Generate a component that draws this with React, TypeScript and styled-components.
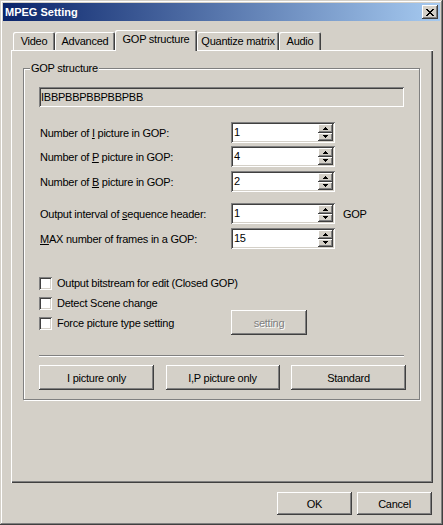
import React from 'react';
import styled, { createGlobalStyle } from 'styled-components';

const FACE = '#d4d0c8';
const SHADOW = '#808080';
const DARK = '#404040';
const LIGHT = '#ffffff';

const RAISED = `inset -1px -1px ${DARK}, inset 1px 1px ${LIGHT}, inset -2px -2px ${SHADOW}, inset 2px 2px ${FACE}`;
const SUNKEN = `inset 1px 1px ${SHADOW}, inset -1px -1px ${LIGHT}, inset 2px 2px ${DARK}, inset -2px -2px ${FACE}`;

const Global = createGlobalStyle`
  html, body { margin: 0; padding: 0; background: ${FACE}; }
  body {
    font-family: "Liberation Sans", Arial, sans-serif;
    font-size: 11px;
    letter-spacing: -0.25px;
    color: #000;
  }
  * { box-sizing: border-box; }
`;

const Window = styled.div`
  width: 443px;
  height: 525px;
  padding: 3px;
  background: ${FACE};
  box-shadow: inset -1px -1px ${DARK}, inset 1px 1px ${FACE}, inset -2px -2px ${SHADOW}, inset 2px 2px ${LIGHT};
  display: flex;
  flex-direction: column;
`;

const TitleBar = styled.div`
  height: 18px;
  flex: none;
  display: flex;
  align-items: center;
  justify-content: space-between;
  padding: 0 2px 0 2px;
  background: linear-gradient(to right, #0a246a, #a6caf0);
`;

const Title = styled.span`
  color: #fff;
  font-weight: bold;
  font-size: 11px;
  letter-spacing: 0;
  line-height: 18px;
`;

const CaptionButton = styled.div`
  width: 16px;
  height: 14px;
  background: ${FACE};
  box-shadow: ${RAISED};
  display: flex;
  align-items: center;
  justify-content: center;
  svg { display: block; }
`;

const Body = styled.div`
  flex: 1;
  display: flex;
  flex-direction: column;
  padding: 9px 7px 0 8px;
`;

const TabStrip = styled.div`
  display: flex;
  align-items: flex-end;
  height: 20px;
  padding-left: 2px;
  position: relative;
  z-index: 1;
`;

const Tab = styled.div<{ $w: number; $active?: boolean }>`
  width: ${(p) => p.$w}px;
  height: ${(p) => (p.$active ? 21 : 18)}px;
  margin-bottom: ${(p) => (p.$active ? -1 : 0)}px;
  padding-bottom: ${(p) => (p.$active ? 3 : 0)}px;
  background: ${FACE};
  border-radius: 2px 2px 0 0;
  box-shadow: inset 1px 1px ${LIGHT}, inset -1px 0 ${DARK}, inset -2px 0 ${SHADOW};
  display: flex;
  align-items: center;
  justify-content: center;
  white-space: nowrap;
`;

const Panel = styled.div`
  width: 422px;
  height: 433px;
  flex: none;
  background: ${FACE};
  box-shadow: inset 1px 1px ${LIGHT}, inset -1px -1px ${DARK}, inset -2px -2px ${SHADOW};
  padding: 18px 0 0 12px;
`;

const GroupBox = styled.div`
  position: relative;
  width: 397px;
  height: 332px;
  border: 1px solid ${SHADOW};
  box-shadow: inset 1px 1px ${LIGHT}, 1px 1px ${LIGHT};
  padding: 18px 15px 0 15px;
  display: flex;
  flex-direction: column;
`;

const Legend = styled.span`
  position: absolute;
  top: -7px;
  left: 6px;
  padding: 0 1px;
  line-height: 13px;
  background: ${FACE};
`;

const PatternField = styled.div`
  height: 20px;
  width: 365px;
  background: ${FACE};
  box-shadow: ${SUNKEN};
  padding: 0 2px;
  display: flex;
  align-items: center;
`;

const FormRow = styled.div<{ $mt: number }>`
  display: flex;
  align-items: center;
  height: 21px;
  margin-top: ${(p) => p.$mt}px;
`;

const FieldLabel = styled.span`
  width: 192px;
  flex: none;
  padding-left: 1px;
  white-space: nowrap;
`;

const Accel = styled.u`
  text-underline-offset: 1px;
`;

const Spinner = styled.div`
  width: 104px;
  height: 21px;
  flex: none;
  background: #fff;
  box-shadow: ${SUNKEN};
  padding: 2px;
  display: flex;
`;

const SpinValue = styled.span`
  flex: 1;
  padding-left: 1px;
  line-height: 17px;
`;

const SpinButtons = styled.div`
  width: 15px;
  display: flex;
  flex-direction: column;
`;

const SpinButton = styled.div`
  flex: 1;
  background: ${FACE};
  box-shadow: ${RAISED};
  display: flex;
  align-items: center;
  justify-content: center;
  svg { display: block; }
`;

const Suffix = styled.span`
  margin-left: 8px;
`;

const CheckRow = styled.div<{ $mt?: number }>`
  display: grid;
  grid-template-columns: 192px auto;
  align-items: center;
  height: 20px;
  margin-top: ${(p) => p.$mt ?? 0}px;
`;

const CheckItem = styled.label`
  display: flex;
  align-items: center;
  white-space: nowrap;
`;

const CheckBox = styled.span`
  width: 13px;
  height: 13px;
  flex: none;
  background: #fff;
  box-shadow: ${SUNKEN};
`;

const CheckText = styled.span`
  margin-left: 5px;
`;

const PushButton = styled.button<{ $w: number; $h: number; $disabled?: boolean }>`
  width: ${(p) => p.$w}px;
  height: ${(p) => p.$h}px;
  flex: none;
  padding: 0;
  border: none;
  background: ${FACE};
  box-shadow: ${RAISED};
  font: inherit;
  letter-spacing: inherit;
  color: ${(p) => (p.$disabled ? SHADOW : '#000')};
  text-shadow: ${(p) => (p.$disabled ? `1px 1px ${LIGHT}` : 'none')};
`;

const SettingButton = styled(PushButton)`
  margin: -3px 0 -2px;
`;

const Separator = styled.div`
  width: 365px;
  height: 2px;
  margin-top: 22px;
  border-top: 1px solid ${SHADOW};
  border-bottom: 1px solid ${LIGHT};
`;

const ButtonRow = styled.div`
  width: 367px;
  margin-top: 8px;
  display: flex;
  justify-content: space-between;
`;

const Footer = styled.div`
  margin-top: 9px;
  padding-right: 1px;
  display: flex;
  justify-content: flex-end;
  gap: 5px;
`;

const CloseGlyph = () => (
  <svg width="8" height="7" viewBox="0 0 8 7" shapeRendering="crispEdges">
    <path
      fill="#000"
      d="M0 0h2v1H0z M6 0h2v1H6z M1 1h2v1H1z M5 1h2v1H5z M2 2h4v1H2z M3 3h2v1H3z M2 4h4v1H2z M1 5h2v1H1z M5 5h2v1H5z M0 6h2v1H0z M6 6h2v1H6z"
    />
  </svg>
);

const ArrowUp = () => (
  <svg width="5" height="3" viewBox="0 0 5 3" shapeRendering="crispEdges">
    <path fill="#000" d="M2 0h1v1H2z M1 1h3v1H1z M0 2h5v1H0z" />
  </svg>
);

const ArrowDown = () => (
  <svg width="5" height="3" viewBox="0 0 5 3" shapeRendering="crispEdges">
    <path fill="#000" d="M0 0h5v1H0z M1 1h3v1H1z M2 2h1v1H2z" />
  </svg>
);

const SpinBox = ({ value }: { value: string }) => (
  <Spinner>
    <SpinValue>{value}</SpinValue>
    <SpinButtons>
      <SpinButton><ArrowUp /></SpinButton>
      <SpinButton><ArrowDown /></SpinButton>
    </SpinButtons>
  </Spinner>
);

const tabs = [
  { label: 'Video', w: 42 },
  { label: 'Advanced', w: 60 },
  { label: 'GOP structure', w: 82, active: true },
  { label: 'Quantize matrix', w: 82 },
  { label: 'Audio', w: 42 },
];

export default function App() {
  return (
    <>
      <Global />
      <Window>
        <TitleBar>
          <Title>MPEG Setting</Title>
          <CaptionButton><CloseGlyph /></CaptionButton>
        </TitleBar>
        <Body>
          <TabStrip>
            {tabs.map((t) => (
              <Tab key={t.label} $w={t.w} $active={t.active}>{t.label}</Tab>
            ))}
          </TabStrip>
          <Panel>
            <GroupBox>
              <Legend>GOP structure</Legend>
              <PatternField>IBBPBBPBBPBBPBB</PatternField>
              <FormRow $mt={15}>
                <FieldLabel>Number of <Accel>I</Accel> picture in GOP:</FieldLabel>
                <SpinBox value="1" />
              </FormRow>
              <FormRow $mt={3}>
                <FieldLabel>Number of <Accel>P</Accel> picture in GOP:</FieldLabel>
                <SpinBox value="4" />
              </FormRow>
              <FormRow $mt={4}>
                <FieldLabel>Number of <Accel>B</Accel> picture in GOP:</FieldLabel>
                <SpinBox value="2" />
              </FormRow>
              <FormRow $mt={11}>
                <FieldLabel>Output interval of <Accel>s</Accel>equence header:</FieldLabel>
                <SpinBox value="1" />
                <Suffix>GOP</Suffix>
              </FormRow>
              <FormRow $mt={4}>
                <FieldLabel><Accel>M</Accel>AX number of frames in a GOP:</FieldLabel>
                <SpinBox value="15" />
              </FormRow>
              <CheckRow $mt={24}>
                <CheckItem><CheckBox /><CheckText>Output bitstream for edit (Closed GOP)</CheckText></CheckItem>
              </CheckRow>
              <CheckRow>
                <CheckItem><CheckBox /><CheckText>Detect Scene change</CheckText></CheckItem>
              </CheckRow>
              <CheckRow>
                <CheckItem><CheckBox /><CheckText>Force picture type setting</CheckText></CheckItem>
                <SettingButton $w={76} $h={25} $disabled>setting</SettingButton>
              </CheckRow>
              <Separator />
              <ButtonRow>
                <PushButton $w={115} $h={25}>I picture only</PushButton>
                <PushButton $w={114} $h={25}>I,P picture only</PushButton>
                <PushButton $w={115} $h={25}>Standard</PushButton>
              </ButtonRow>
            </GroupBox>
          </Panel>
          <Footer>
            <PushButton $w={75} $h={23}>OK</PushButton>
            <PushButton $w={75} $h={23}>Cancel</PushButton>
          </Footer>
        </Body>
      </Window>
    </>
  );
}
